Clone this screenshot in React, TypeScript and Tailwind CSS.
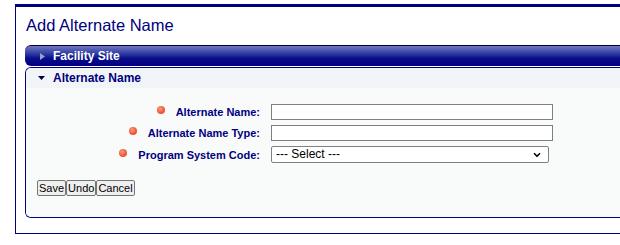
import { ChevronDown } from 'lucide-react';

const font = { fontFamily: '"Liberation Sans", Arial, sans-serif' };

function Dot() {
  return (
    <span className="inline-block w-[8px] h-[8px] rounded-full mr-[11px] -translate-y-[2px] bg-[radial-gradient(circle_at_40%_35%,#ff9a80_0%,#f05a3a_55%,#d8401e_100%)]" />
  );
}

const fields = [
  { label: 'Alternate Name:', kind: 'input' },
  { label: 'Alternate Name Type:', kind: 'input' },
  { label: 'Program System Code:', kind: 'select' },
];

export default function App() {
  return (
    <div className="w-[620px] h-[245px] overflow-hidden bg-white" style={font}>
      <div className="mt-[4px] ml-[15px] w-[640px] border-t-[3px] border-l border-b border-[#000080] pb-[15px]">
        {/* Page title */}
        <h1 className="pt-[9px] pl-[10px] text-[16.5px] leading-[19px] text-[#000080]">Add Alternate Name</h1>

        {/* Collapsed section */}
        <div className="mt-[10px] ml-[9px] h-[21px] flex items-center border-t border-[#000040] rounded-l-[6px] bg-linear-to-b from-[#7676c4] via-[#0c0c8c] via-60% to-[#000080]">
          <svg width="5" height="7" viewBox="0 0 5 7" className="ml-[15px] mr-[8px]">
            <path d="M0 0 L5 3.5 L0 7 Z" fill="#9d9dcc" />
          </svg>
          <span className="text-white font-bold text-[12px]">Facility Site</span>
        </div>

        {/* Expanded section */}
        <div className="mt-[1px] ml-[9px] border border-r-0 border-[#000080] rounded-l-[6px] overflow-hidden bg-[#fbfdfd]">
          <div className="h-[20px] flex items-center bg-[#f2f5f7]">
            <svg width="7" height="4" viewBox="0 0 7 4" className="ml-[12px] mr-[8px]">
              <path d="M0 0 L7 0 L3.5 4 Z" fill="#000050" />
            </svg>
            <span className="text-[#000080] font-bold text-[12px]">Alternate Name</span>
          </div>

          <div className="pt-[16px] pb-[21px] pl-[11px] bg-[#f9fbfb]">
            <div className="-ml-[11px] grid grid-cols-[234px_auto] gap-x-[11px] gap-y-[5px] items-center">
              {fields.map((f) => (
                <div key={f.label} className="contents">
                  <label className="flex items-center justify-end text-[11px] font-bold text-[#000080] leading-[16px]">
                    <Dot />
                    {f.label}
                  </label>
                  {f.kind === 'input' ? (
                    <input className="w-[282px] h-[16px] border border-[#808080] bg-white outline-none" />
                  ) : (
                    <div className="relative w-[278px] h-[17px] border border-[#808080] rounded-[2px] bg-white flex items-center">
                      <span className="pl-[4px] text-[12px] text-black leading-[15px]">--- Select ---</span>
                      <ChevronDown className="absolute right-[6px] top-[3px] w-[10px] h-[10px] text-black" strokeWidth={4} />
                    </div>
                  )}
                </div>
              ))}
            </div>

            <div className="mt-[17px] flex">
              {['Save', 'Undo', 'Cancel'].map((b) => (
                <button
                  key={b}
                  className="h-[16px] px-[1px] border border-[#767676] rounded-[2px] bg-[#efefef] text-[11px] leading-[14px] text-black"
                >
                  {b}
                </button>
              ))}
            </div>
          </div>
        </div>
      </div>
    </div>
  );
}
